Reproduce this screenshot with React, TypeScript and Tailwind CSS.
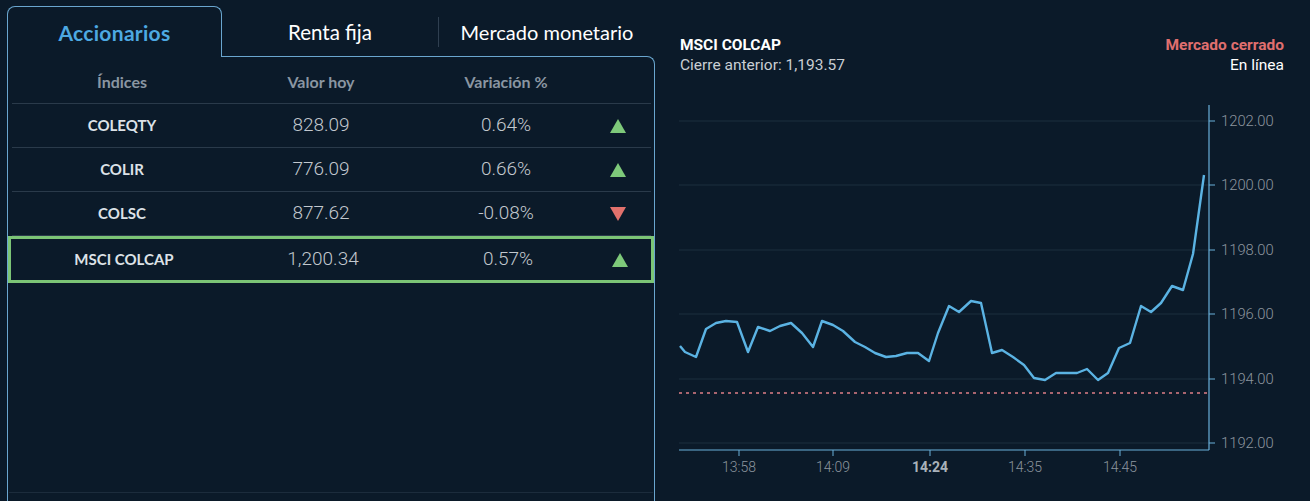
import React from "react";

const rows = [
  { name: "COLEQTY", value: "828.09", pct: "0.64%", up: true },
  { name: "COLIR", value: "776.09", pct: "0.66%", up: true },
  { name: "COLSC", value: "877.62", pct: "-0.08%", up: false },
];

const pts: [number, number][] = [
  [680, 346], [685, 352], [696, 357], [706, 329], [716, 323], [726, 321], [737, 322],
  [748, 352], [758, 327], [770, 331], [780, 326], [791, 323], [802, 333], [813, 347],
  [822, 321], [833, 325], [843, 331], [855, 342], [865, 347], [875, 353], [886, 357],
  [896, 356], [907, 353], [918, 353], [929, 361], [938, 333], [949, 306], [959, 312],
  [971, 301], [981, 303], [992, 353], [1002, 350], [1013, 357], [1024, 365], [1034, 378],
  [1045, 380], [1056, 373], [1066, 373], [1077, 373], [1087, 369], [1098, 380], [1108, 373],
  [1119, 348], [1130, 343], [1141, 306], [1151, 312], [1161, 303], [1172, 286], [1183, 290],
  [1193, 254], [1204, 175],
];

function Arrow({ up }: { up: boolean }) {
  return (
    <svg width="16" height="14" viewBox="0 0 16 14">
      {up ? (
        <polygon points="8,0 16,14 0,14" fill="#7ec97a" />
      ) : (
        <polygon points="0,0 16,0 8,14" fill="#e2716c" />
      )}
    </svg>
  );
}

const gridCols = "grid grid-cols-[224px_174px_196px_28px_1fr] items-center";

function Chart() {
  const ox = 655;
  const oy = 100;
  const line = pts.map(([x, y]) => `${x - ox},${y - oy}`).join(" ");
  const grid = [
    { y: 121, l: "1202.00" },
    { y: 185, l: "1200.00" },
    { y: 250, l: "1198.00" },
    { y: 314, l: "1196.00" },
    { y: 379, l: "1194.00" },
    { y: 443, l: "1192.00" },
  ];
  const xt = [
    { x: 739, l: "13:58", b: false },
    { x: 833, l: "14:09", b: false },
    { x: 930, l: "14:24", b: true },
    { x: 1025, l: "14:35", b: false },
    { x: 1120, l: "14:45", b: false },
  ];
  return (
    <svg width="655" height="380" viewBox="0 0 655 380" className="block mt-[25px]">
      {grid.map((g) => (
        <g key={g.l}>
          <line x1={24} x2={554} y1={g.y - oy} y2={g.y - oy} stroke="#1c2e3f" strokeWidth={1} />
          <line x1={554} x2={560} y1={g.y - oy} y2={g.y - oy} stroke="#6ab0da" strokeWidth={1} />
          <text
            x={566}
            y={g.y - oy + 5}
            fill="#8b959e"
            fontSize={14.8}
            fontFamily="Roboto, sans-serif"
            fontWeight={300}
          >
            {g.l}
          </text>
        </g>
      ))}
      <line x1={554} x2={554} y1={5} y2={350} stroke="#6ab0da" strokeWidth={1.2} />
      <line x1={24} x2={554} y1={350} y2={350} stroke="#6ab0da" strokeWidth={1.2} />
      {xt.map((t) => (
        <g key={t.l}>
          <line x1={t.x - ox} x2={t.x - ox} y1={350} y2={356} stroke="#6ab0da" strokeWidth={1} />
          <text
            x={t.x - ox}
            y={372}
            textAnchor="middle"
            fill={t.b ? "#a9b2ba" : "#8b959e"}
            fontSize={14}
            fontWeight={t.b ? 700 : 300}
            fontFamily="Roboto, sans-serif"
          >
            {t.l}
          </text>
        </g>
      ))}
      <line
        x1={24}
        x2={554}
        y1={293}
        y2={293}
        stroke="#e07f86"
        strokeWidth={1.6}
        strokeDasharray="3 4"
      />
      <polyline
        points={line}
        fill="none"
        stroke="#5bb3e3"
        strokeWidth={2.4}
        strokeLinejoin="round"
      />
    </svg>
  );
}

export default function App() {
  return (
    <div className="flex h-[501px] w-full overflow-hidden bg-[#0b1a29] text-white">
      <div className="ml-[7px] mt-[6px] flex w-[648px] shrink-0 flex-col">
        <div className="flex h-[53px] items-stretch">
          <div className="relative z-10 -mb-px flex w-[215px] items-center justify-center rounded-t-lg border border-b-0 border-[#6aa6cf] bg-[#0b1a29] pt-[2px] font-['Lato',sans-serif] text-[21px] font-bold tracking-[0.3px] text-[#4da9e2]">
            Accionarios
          </div>
          <div className="flex flex-1 items-center pt-[2px]">
            <div className="flex w-[216px] items-center justify-center font-['Lato',sans-serif] text-[20.5px] text-white">
              Renta fija
            </div>
            <div className="flex h-[30px] flex-1 items-center justify-center border-l border-[#2f3f50] font-['Lato',sans-serif] text-[20px] text-white">
              Mercado monetario
            </div>
          </div>
        </div>
        <div className="flex h-[470px] flex-col rounded-tr-lg border border-b-0 border-[#6aa6cf]">
          <div className={`${gridCols} mx-[4px] mr-[3px] h-[47px] border-b border-[#2a3a4a] pt-[3px] font-['Lato',sans-serif] text-[16px] font-bold text-[#8a96a2]`}>
            <div className="text-center -ml-[4px]">Índices</div>
            <div className="text-center -ml-[4px]">Valor hoy</div>
            <div className="text-center -ml-[4px]">Variación %</div>
            <div />
            <div />
          </div>
          {rows.map((r) => (
            <div
              key={r.name}
              className={`${gridCols} mx-[4px] mr-[3px] h-[44px] border-b border-[#2a3a4a]`}
            >
              <div className="-ml-[4px] text-center font-['Lato',sans-serif] text-[15px] font-bold text-[#dde2e7]">
                {r.name}
              </div>
              <div className="-ml-[4px] text-center font-['Roboto',sans-serif] text-[19px] font-light text-[#c2c8ce]">
                {r.value}
              </div>
              <div className="-ml-[4px] text-center font-['Roboto',sans-serif] text-[19px] font-light text-[#c2c8ce]">
                {r.pct}
              </div>
              <div className="-ml-[4px] flex justify-center">
                <Arrow up={r.up} />
              </div>
              <div />
            </div>
          ))}
          <div className="mx-0 h-[47px] border-[3px] border-[#7cc576]">
            <div className={`${gridCols} h-full pl-[1px]`}>
              <div className="text-center font-['Lato',sans-serif] text-[15px] font-bold text-[#dde2e7]">
                MSCI COLCAP
              </div>
              <div className="text-center font-['Roboto',sans-serif] text-[19px] font-light text-[#c2c8ce]">
                1,200.34
              </div>
              <div className="text-center font-['Roboto',sans-serif] text-[19px] font-light text-[#c2c8ce]">
                0.57%
              </div>
              <div className="flex justify-center">
                <Arrow up={true} />
              </div>
              <div />
            </div>
          </div>
          <div className="mx-[1px] mt-[209px] border-b border-[#1c2c3c]" />
        </div>
      </div>
      <div className="flex flex-1 flex-col">
        <div className="flex justify-between pl-[25px] pr-[26px] pt-[35px] font-['Roboto',sans-serif] text-[15.5px] leading-[20px]">
          <div>
            <div className="font-bold text-white">MSCI COLCAP</div>
            <div className="text-[#c9ced3]">Cierre anterior: 1,193.57</div>
          </div>
          <div className="text-right">
            <div className="font-bold text-[#e06f6f]">Mercado cerrado</div>
            <div className="text-white">En línea</div>
          </div>
        </div>
        <Chart />
      </div>
    </div>
  );
}
